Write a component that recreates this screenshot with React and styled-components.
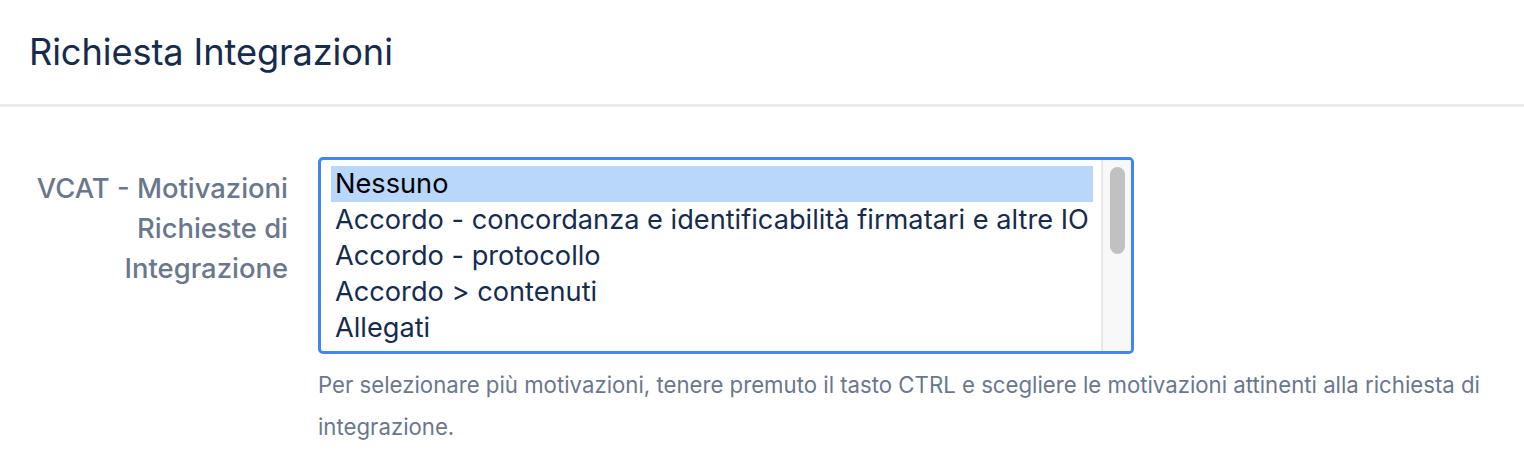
import React from "react";
import styled, { createGlobalStyle } from "styled-components";

const Global = createGlobalStyle`
  html, body { margin: 0; padding: 0; background: #ffffff; }
  body { font-family: Inter, "Noto Sans", sans-serif; -webkit-font-smoothing: antialiased; }
`;

const Page = styled.div`
  width: 1524px;
  min-height: 458px;
  background: #fff;
`;

const Header = styled.header`
  height: 104px;
  display: flex;
  align-items: center;
  padding: 0 29px;
  border-bottom: 3px solid #ebecf0;
  box-sizing: content-box;
`;

const Title = styled.h1`
  margin: 0;
  font-size: 36.2px;
  font-weight: 400;
  color: #172b4d;
  letter-spacing: -0.1px;
`;

const Form = styled.div`
  padding-top: 50px;
  display: grid;
  grid-template-columns: 288px 816px;
  column-gap: 30px;
`;

const Label = styled.label`
  text-align: right;
  font-size: 27.4px;
  line-height: 40px;
  font-weight: 500;
  color: #6b778c;
  padding-top: 11px;
`;

const Field = styled.div`
  display: flex;
  flex-direction: column;
`;

const ListBox = styled.div`
  height: 197px;
  box-sizing: border-box;
  border: 3px solid #4285f4;
  border-radius: 5px;
  display: flex;
  overflow: hidden;
  background: #fff;
`;

const Options = styled.div`
  flex: 1;
  padding: 6px 8px 0 10px;
  overflow: hidden;
`;

const Option = styled.div`
  height: 36px;
  line-height: 36px;
  padding-left: 4px;
  font-size: 27.2px;
  white-space: nowrap;
  color: ${(p) => (p.$selected ? "#000" : "#172b4d")};
  background: ${(p) => (p.$selected ? "#b9d6fb" : "transparent")};
`;

const Track = styled.div`
  width: 30px;
  border-left: 2px solid #e8e8e8;
  background: #f8f8f8;
  display: flex;
  justify-content: center;
  padding-top: 7px;
  box-sizing: border-box;
`;

const Thumb = styled.div`
  width: 15px;
  height: 87px;
  border-radius: 8px;
  background: #c1c1c1;
`;

const Help = styled.p`
  margin: 10px 0 0;
  font-size: 22.2px;
  line-height: 42px;
  color: #6b778c;
  width: 1190px;
`;

const options = [
  "Nessuno",
  "Accordo - concordanza e identificabilità firmatari e altre IO",
  "Accordo - protocollo",
  "Accordo > contenuti",
  "Allegati",
  "Anagrafica - dati identificativi richiedente",
];

export default function App() {
  return (
    <Page>
      <Global />
      <Header>
        <Title>Richiesta Integrazioni</Title>
      </Header>
      <Form>
        <Label>
          VCAT - Motivazioni
          <br />
          Richieste di
          <br />
          Integrazione
        </Label>
        <Field>
          <ListBox role="listbox" aria-multiselectable="true">
            <Options>
              {options.map((o, i) => (
                <Option key={o} role="option" $selected={i === 0} aria-selected={i === 0}>
                  {o}
                </Option>
              ))}
            </Options>
            <Track>
              <Thumb />
            </Track>
          </ListBox>
          <Help>
            Per selezionare più motivazioni, tenere premuto il tasto CTRL e scegliere le motivazioni attinenti alla richiesta di integrazione.
          </Help>
        </Field>
      </Form>
    </Page>
  );
}
